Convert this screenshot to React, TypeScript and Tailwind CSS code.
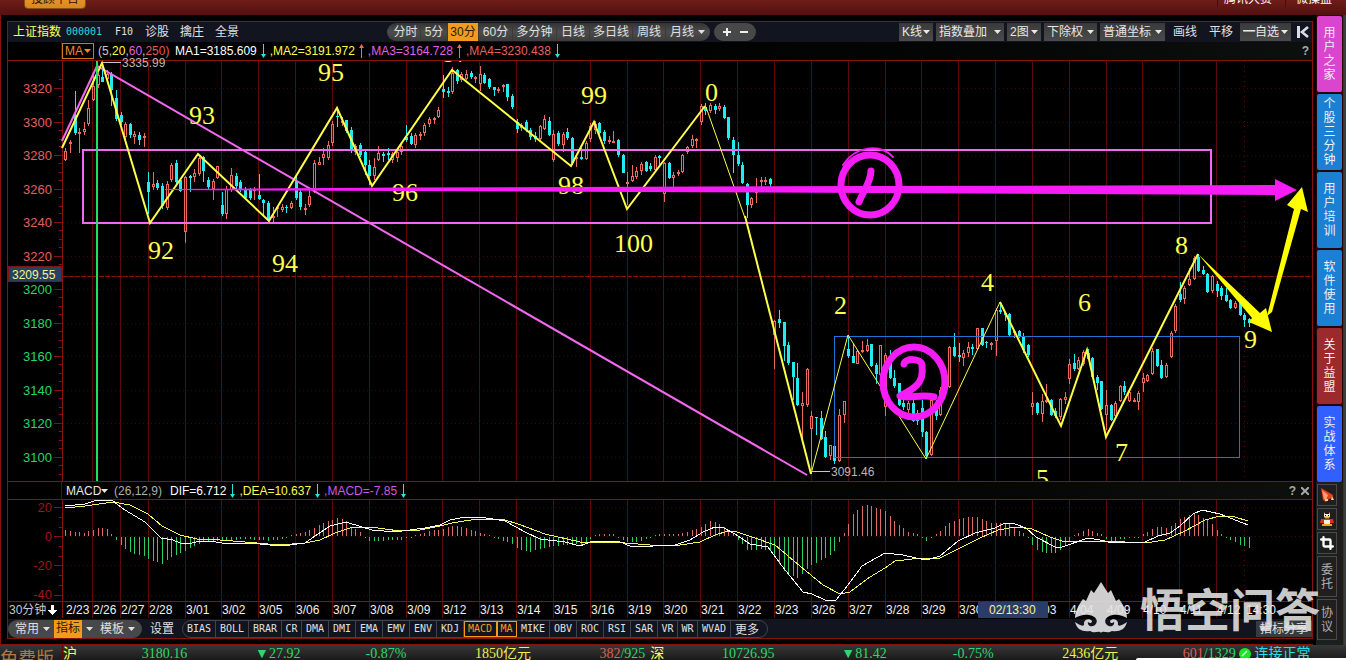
import type { ReactNode } from "react";
import clsx from "clsx";
import { Crop } from "lucide-react";

type Point = [number, number];
// [rising, high, body top, body bottom, low]
type Candle = [number, number, number, number, number];

const FIRST_BAR = 65.3;
const BAR_STEP = 4.605;

const barX = (index: number) => Math.round(FIRST_BAR + BAR_STEP * index);

const candles: Candle[] = [
  [1, 148, 151, 160, 161], [1, 140, 142, 144, 153], [0, 91, 115, 133, 135], [1, 128, 132, 134, 153],
  [1, 122, 129, 132, 135], [1, 100, 108, 124, 126], [1, 72, 86, 100, 101], [1, 73, 75, 85, 88],
  [0, 63, 77, 82, 82], [1, 70, 74, 79, 82], [0, 72, 74, 90, 106], [0, 90, 98, 119, 121],
  [0, 112, 115, 122, 125], [1, 122, 124, 137, 140], [0, 123, 124, 135, 138], [1, 131, 134, 137, 144],
  [0, 132, 135, 140, 145], [1, 133, 136, 138, 147],
  [0, 172, 182, 192, 214], [1, 172, 184, 187, 190], [0, 180, 183, 188, 190], [0, 183, 186, 206, 209],
  [1, 181, 184, 208, 210], [1, 163, 165, 180, 182], [0, 160, 163, 182, 184], [0, 178, 180, 191, 192],
  [1, 176, 177, 232, 243], [0, 175, 176, 178, 192], [1, 169, 173, 177, 182], [1, 155, 158, 174, 176],
  [0, 156, 157, 171, 182], [0, 177, 180, 187, 190], [1, 179, 181, 189, 200], [1, 166, 166, 178, 179],
  [0, 192, 205, 214, 216], [1, 186, 189, 214, 219], [1, 168, 175, 190, 192], [0, 173, 176, 186, 189],
  [0, 180, 182, 190, 192], [0, 187, 189, 198, 199], [0, 188, 190, 198, 200], [1, 187, 189, 190, 200],
  [0, 174, 195, 199, 200], [0, 199, 200, 203, 215], [0, 201, 203, 219, 222], [1, 207, 216, 218, 222],
  [1, 206, 207, 209, 217], [1, 204, 207, 210, 212], [0, 205, 207, 208, 213], [1, 201, 203, 208, 209],
  [0, 175, 181, 198, 200], [0, 190, 192, 207, 210], [1, 204, 208, 210, 215], [1, 190, 196, 205, 207],
  [1, 160, 163, 192, 193], [1, 157, 162, 165, 165], [1, 148, 154, 158, 165], [1, 141, 145, 158, 160],
  [1, 121, 124, 143, 146], [0, 107, 116, 117, 127], [1, 117, 121, 123, 126], [0, 120, 120, 131, 133],
  [0, 127, 130, 150, 153], [1, 144, 146, 152, 155], [0, 143, 145, 155, 157], [0, 150, 152, 165, 175],
  [0, 160, 165, 176, 185], [1, 158, 167, 176, 180], [1, 146, 153, 160, 161], [0, 152, 154, 156, 162],
  [0, 148, 153, 155, 160], [1, 152, 154, 160, 163], [1, 150, 152, 158, 162], [1, 142, 146, 152, 155],
  [0, 125, 137, 140, 142], [0, 133, 136, 144, 145], [1, 133, 135, 145, 148], [1, 132, 134, 135, 140],
  [1, 123, 125, 133, 136], [1, 117, 119, 124, 127], [1, 117, 118, 120, 124], [1, 107, 110, 117, 118],
  [0, 75, 89, 92, 98], [0, 87, 91, 93, 97], [1, 67, 73, 92, 94], [0, 69, 70, 81, 84],
  [1, 72, 74, 80, 82], [1, 70, 74, 79, 80], [0, 71, 73, 77, 79], [1, 76, 77, 79, 83],
  [1, 66, 74, 84, 91], [0, 73, 75, 83, 84], [0, 78, 79, 87, 89], [0, 87, 87, 90, 96],
  [1, 87, 89, 91, 93], [1, 84, 85, 86, 92], [0, 84, 84, 97, 101], [0, 94, 96, 107, 109],
  [0, 119, 122, 129, 133], [1, 123, 125, 128, 131], [0, 120, 122, 130, 132], [0, 128, 130, 137, 140],
  [0, 132, 136, 139, 142], [1, 125, 126, 139, 142], [1, 115, 119, 129, 130], [0, 117, 121, 135, 136],
  [1, 130, 134, 160, 162], [0, 131, 133, 144, 146], [1, 132, 134, 145, 152], [0, 128, 132, 138, 140],
  [0, 137, 138, 163, 165], [1, 155, 157, 159, 167], [0, 148, 157, 159, 160], [1, 141, 143, 159, 160],
  [1, 123, 126, 139, 142], [1, 121, 124, 130, 134], [0, 122, 123, 133, 135], [0, 130, 132, 141, 144],
  [1, 136, 140, 142, 144], [1, 131, 141, 142, 143], [0, 139, 140, 155, 157], [0, 154, 155, 173, 173],
  [1, 172, 182, 183, 205], [1, 165, 176, 181, 182], [1, 167, 171, 177, 179], [1, 162, 164, 171, 175],
  [0, 161, 162, 171, 172], [0, 163, 166, 169, 171], [1, 155, 157, 170, 172], [0, 155, 156, 158, 167],
  [1, 162, 163, 194, 202], [0, 162, 163, 178, 179], [1, 172, 175, 178, 188], [1, 170, 172, 174, 176],
  [1, 154, 155, 172, 173], [1, 146, 147, 152, 154], [1, 135, 139, 146, 148], [1, 138, 139, 140, 148],
  [1, 104, 106, 122, 125], [0, 103, 107, 111, 115], [1, 103, 105, 111, 113], [0, 104, 106, 110, 114],
  [1, 103, 106, 109, 111], [0, 105, 107, 118, 119], [0, 117, 117, 138, 140], [0, 137, 140, 155, 173],
  [0, 142, 155, 164, 166], [0, 162, 165, 183, 184], [0, 183, 184, 205, 218], [1, 197, 198, 205, 208],
  [1, 178, 190, 193, 203], [1, 177, 180, 181, 191], [1, 177, 180, 181, 185], [0, 178, 179, 184, 187],
  [1, 320, 321, 335, 369], [0, 310, 319, 323, 328], [0, 322, 322, 346, 361], [0, 342, 345, 363, 365],
  [0, 362, 362, 377, 400], [0, 363, 378, 405, 406], [1, 392, 403, 406, 440], [1, 368, 369, 405, 407],
  [1, 411, 416, 429, 470], [0, 417, 417, 418, 435], [0, 411, 418, 439, 440], [0, 431, 437, 457, 458],
  [1, 445, 445, 456, 460], [0, 445, 446, 461, 464], [1, 409, 415, 461, 462], [1, 401, 401, 415, 423],
  [0, 335, 349, 356, 358], [0, 344, 356, 363, 363], [1, 350, 351, 364, 364], [1, 341, 350, 352, 353],
  [1, 339, 345, 351, 352], [0, 344, 344, 366, 367], [0, 363, 365, 374, 384], [1, 345, 345, 375, 376],
  [1, 353, 355, 407, 416], [0, 350, 360, 378, 379], [0, 370, 378, 386, 388], [0, 383, 383, 405, 406],
  [0, 400, 403, 407, 410], [1, 401, 403, 410, 414], [0, 399, 403, 421, 422], [0, 410, 413, 421, 425],
  [0, 400, 408, 432, 437], [0, 431, 432, 456, 459], [1, 395, 400, 455, 456], [0, 400, 403, 416, 420],
  [1, 387, 390, 415, 416], [1, 375, 378, 390, 392], [1, 346, 347, 387, 388], [0, 333, 347, 356, 357],
  [0, 343, 355, 357, 362], [1, 350, 353, 358, 366], [1, 342, 347, 353, 357], [0, 344, 347, 349, 355],
  [1, 328, 328, 349, 350], [0, 328, 328, 345, 346], [0, 341, 342, 343, 348], [1, 342, 343, 344, 350],
  [1, 308, 310, 341, 356], [0, 305, 310, 312, 314], [0, 312, 313, 315, 321], [0, 313, 314, 335, 336],
  [1, 330, 331, 333, 338], [0, 330, 331, 336, 338], [0, 333, 336, 350, 353], [0, 344, 345, 355, 357],
  [1, 392, 403, 407, 415], [0, 402, 403, 413, 415], [1, 394, 401, 414, 422], [1, 384, 400, 402, 403],
  [0, 399, 400, 415, 416], [0, 408, 411, 416, 418], [1, 398, 399, 417, 420], [1, 392, 397, 400, 404],
  [1, 359, 364, 379, 384], [0, 354, 363, 369, 371], [1, 357, 360, 369, 370], [1, 350, 352, 364, 366],
  [0, 349, 353, 359, 360], [0, 357, 358, 377, 378], [0, 375, 377, 383, 390], [0, 381, 381, 409, 410],
  [1, 390, 405, 415, 430], [0, 404, 405, 420, 421], [1, 401, 403, 416, 418], [1, 385, 386, 401, 402],
  [0, 381, 386, 392, 395], [1, 390, 392, 401, 402], [1, 398, 400, 401, 402], [1, 391, 393, 402, 410],
  [1, 373, 378, 383, 392], [1, 374, 375, 381, 382], [1, 348, 351, 374, 375], [0, 349, 349, 366, 367],
  [0, 360, 365, 378, 379], [1, 363, 365, 377, 378], [1, 331, 333, 357, 358], [1, 304, 306, 331, 333],
  [0, 282, 294, 300, 302], [1, 286, 288, 299, 304], [1, 268, 279, 285, 286], [1, 256, 258, 279, 280],
  [0, 254, 257, 271, 272], [0, 266, 270, 274, 275], [0, 273, 274, 292, 293], [1, 275, 276, 291, 293],
  [0, 281, 284, 291, 297], [0, 286, 288, 296, 300], [0, 288, 295, 301, 302], [0, 299, 300, 308, 309],
  [1, 301, 303, 308, 309], [0, 303, 303, 315, 316], [0, 313, 315, 320, 327], [0, 318, 319, 323, 327],
];

const dayLines = [
  92, 120, 148, 185, 221, 258, 295, 332, 369, 406, 442, 479, 516, 553, 590, 627, 663, 700, 737, 774,
  811, 848, 885, 921, 958, 995, 1032, 1069, 1106, 1142, 1179, 1216,
];

const dateLabels: [string, number][] = [
  ["2/23", 66], ["2/26", 93], ["2/27", 121], ["2/28", 149], ["3/01", 186], ["3/02", 222],
  ["3/05", 259], ["3/06", 296], ["3/07", 333], ["3/08", 370], ["3/09", 407], ["3/12", 443],
  ["3/13", 480], ["3/14", 517], ["3/15", 554], ["3/16", 591], ["3/19", 628], ["3/20", 664],
  ["3/21", 701], ["3/22", 738], ["3/23", 775], ["3/26", 812], ["3/27", 849], ["3/28", 886],
  ["3/29", 922], ["3/30", 959], ["4/03", 1033], ["4/04", 1070], ["4/09", 1107], ["4/10", 1143],
  ["4/11", 1180], ["4/12", 1217], ["14:30", 1246],
];

const prices = [3320, 3300, 3280, 3260, 3240, 3220, 3200, 3180, 3160, 3140, 3120, 3100];
const priceY = (price: number) => Math.round(89 + (3320 - price) * 1.677);

const waveLabels: [string, number, number][] = [
  ["92", 148, 259], ["93", 189, 124], ["94", 272, 272], ["95", 318, 81], ["96", 392, 201],
  ["97", 443, 62], ["98", 558, 194], ["99", 581, 104], ["100", 614, 252], ["0", 705, 101],
  ["2", 834, 314], ["4", 981, 291], ["5", 1036, 487], ["6", 1078, 311], ["7", 1115, 461],
  ["8", 1175, 254], ["9", 1244, 348],
];

const macdHeights: Point[] = [
  [65, 6], [74, 4], [84, 3], [97, 8], [107, 7], [112, 1], [116, -3], [125, -12], [134, -17], [143, -18],
  [150, -23], [162, -27], [171, -20], [185, -14], [195, -9], [204, -5], [222, -4], [245, -2], [270, -4],
  [286, -1], [292, 1], [305, 4], [314, 8], [325, 14], [337, 18], [345, 16], [352, 8], [358, 5], [364, 1],
  [369, -4], [400, -3], [408, -1], [415, 1], [430, 5], [442, 7], [455, 11], [466, 8], [478, 4], [488, 1],
  [495, -1], [510, -6], [520, -13], [530, -15], [540, -12], [555, -9], [572, -7], [582, -8], [590, -2],
  [596, 2], [614, 2], [618, -1], [628, -6], [640, -4], [652, -1], [658, 2], [680, 2], [700, 8], [710, 15],
  [720, 12], [728, 6], [734, 1], [738, -3], [748, -14], [760, -12], [771, -14], [783, -34], [798, -41],
  [811, -28], [820, -24], [832, -17], [841, -2], [845, 4], [850, 18], [860, 30], [868, 31], [885, 25],
  [897, 12], [908, 4], [920, 1], [926, -4], [931, 0], [936, 2], [950, 14], [965, 19], [978, 19], [990, 13],
  [1008, 13], [1020, 4], [1028, 0], [1034, -12], [1045, -16], [1055, -16], [1064, -10], [1072, 0],
  [1080, 4], [1087, 7], [1098, 3], [1105, 0], [1108, -6], [1120, -2], [1140, 0], [1145, 3], [1155, 9],
  [1168, 8], [1180, 17], [1195, 23], [1210, 14], [1220, 2], [1228, -2], [1240, -8], [1249, -11],
];

const interpolate = (points: Point[], x: number) => {
  const next = points.findIndex((p) => p[0] >= x);
  if (next <= 0) return points[0][1];
  const [x0, y0] = points[next - 1];
  const [x1, y1] = points[next];
  return Math.round(y0 + ((y1 - y0) * (x - x0)) / (x1 - x0));
};

const difLine =
  "65,506 85,504 97,500 113,501 125,510 145,522 161,538 173,540 180,543 192,543 200,541 210,541 222,543 250,543 270,545 290,545 305,543 318,534 330,526 346,522 362,527 372,530 395,532 410,530 425,528 440,525 450,520 465,517 480,517 505,521 525,532 540,539 565,542 580,546 590,542 618,541 632,547 675,545 690,540 703,532 715,527 722,527 735,534 750,544 768,547 782,566 803,592 812,594 825,600 836,600 848,585 862,566 885,553 903,555 916,558 927,560 940,556 958,541 975,533 995,528 1005,523 1015,524 1026,528 1036,537 1055,547 1062,547 1088,538 1100,540 1112,543 1145,542 1158,536 1170,533 1180,526 1193,514 1202,510 1220,514 1248,525";
const deaLine =
  "65,508 85,506 113,502 130,505 148,514 162,526 180,535 197,539 220,540 245,542 280,545 305,543 320,540 335,533 350,528 370,527 400,531 420,530 440,526 452,523 477,519 505,520 518,524 545,534 580,542 595,542 625,543 650,545 680,545 700,542 715,535 728,531 737,532 752,537 775,545 800,566 823,585 840,594 850,592 870,577 885,568 895,561 921,558 940,558 960,548 980,538 998,530 1015,527 1032,529 1050,537 1065,542 1105,541 1145,543 1165,540 1185,531 1205,520 1220,516 1235,517 1248,521";

const periods = [
  { label: "分时", className: "w-[34px] pl-1" },
  { label: "5分", className: "w-[27px]" },
  { label: "30分", className: "w-[31px] bg-[#f59a1c] text-[#2a1a00]" },
  { label: "60分", className: "w-[34px]" },
  { label: "多分钟", className: "w-[44px]" },
  { label: "日线", className: "w-[33px]" },
  { label: "多日线", className: "w-[43px]" },
  { label: "周线", className: "w-[33px]" },
];

const indicators = [
  "BIAS", "BOLL", "BRAR", "CR", "DMA", "DMI", "EMA", "EMV", "ENV", "KDJ", "MACD", "MA", "MIKE",
  "OBV", "ROC", "RSI", "SAR", "VR", "WR", "WVAD",
];

const sideTabs = [
  { label: "用户之家", className: "bg-[#d945cc]" },
  { label: "个股三分钟", className: "bg-[#1b7fd4]" },
  { label: "用户培训", className: "bg-[#1b7fd4]" },
  { label: "软件使用", className: "bg-[#1b7fd4]" },
  { label: "关于益盟", className: "bg-[#9c2a2c]" },
  { label: "实战体系", className: "bg-[#3060ff]" },
];

const Caret = ({ className }: { className?: string }) => (
  <svg viewBox="0 0 7 4" className={clsx("h-1 w-[7px] shrink-0", className)}>
    <path d="M0 0h7L3.5 4z" fill="currentColor" />
  </svg>
);

const Trend = ({ up = false }: { up?: boolean }) => (
  <svg viewBox="0 0 5 14" className="mx-1 h-[14px] w-[5px] shrink-0">
    {up ? (
      <path d="M2 14V4H0L2.5 0 5 4H3v10z" fill="#f26a5e" />
    ) : (
      <path d="M2 0v10H0l2.5 4L5 10H3V0z" fill="#1fe5e5" />
    )}
  </svg>
);

const Dropdown = ({ label, className, options }: { label: string; className: string; options: string[] }) => (
  <label
    className={clsx(
      "relative flex h-[18px] items-center bg-linear-to-b from-[#3a3a3a] to-[#4a4a4a] text-[#e8e8e8]",
      className,
    )}
  >
    <span className="sr-only">{label}</span>
    <select className="w-full cursor-pointer appearance-none bg-transparent pl-[3px] outline-none">
      {options.map((option) => (
        <option key={option}>{option}</option>
      ))}
    </select>
    <Caret className="pointer-events-none absolute right-[3px]" />
  </label>
);

const Toolbar = () => (
  <div className="flex h-5 items-center bg-[#12141f] text-[#e0e0e0]">
    <div className="flex w-[379px] shrink-0 items-center pl-[5px]">
      <span className="w-[53px] text-[#ffff66]">上证指数</span>
      <span className="w-[49px] font-['DejaVu_Sans_Mono',monospace] text-[10px] text-[#2fd8d8]">000001</span>
      <button type="button" className="w-[30px] text-left font-['DejaVu_Sans_Mono',monospace] text-[10px]">
        F10
      </button>
      <button type="button" className="w-[35px] text-left">诊股</button>
      <button type="button" className="w-[35px] text-left">擒庄</button>
      <button type="button">全景</button>
    </div>
    <div className="flex h-[18px] overflow-hidden rounded-full bg-linear-to-b from-[#343434] via-[#4c4c4c] to-[#3c3c3c]">
      {periods.map((period) => (
        <button
          type="button"
          key={period.label}
          className={clsx("shrink-0 border-r border-[#3a3a3a] text-center", period.className)}
        >
          {period.label}
        </button>
      ))}
      <button type="button" className="flex w-11 items-center gap-1 pl-1">
        月线
        <Caret />
      </button>
    </div>
    <div className="ml-1 flex h-[18px] w-[42px] items-center justify-around rounded-full bg-[#484848] px-1">
      <button type="button" aria-label="放大">
        <svg viewBox="0 0 8 8" className="size-2">
          <path d="M0 4h8M4 0v8" stroke="#f0f0f0" strokeWidth="2" />
        </svg>
      </button>
      <button type="button" aria-label="缩小">
        <svg viewBox="0 0 8 8" className="size-2">
          <path d="M0 4h8" stroke="#f0f0f0" strokeWidth="2" />
        </svg>
      </button>
    </div>
    <div className="ml-auto flex items-center gap-[3px]">
      <Dropdown label="K线类型" className="w-[34px]" options={["K线"]} />
      <Dropdown label="叠加" className="w-[68px]" options={["指数叠加"]} />
      <Dropdown label="图数" className="w-[34px]" options={["2图"]} />
      <Dropdown label="复权" className="w-[53px]" options={["下除权"]} />
      <Dropdown label="坐标" className="w-[65px]" options={["普通坐标"]} />
      <button type="button" className="w-[34px]">画线</button>
      <button type="button" className="w-[32px]">平移</button>
      <Dropdown label="自选" className="w-[51px]" options={["━自选"]} />
      <button type="button" aria-label="收起" className="flex w-[18px] justify-center">
        <svg viewBox="0 0 12 12" className="size-3" fill="none" stroke="#d8dde6">
          <path d="M1.5 0v12" strokeWidth="3" />
          <path d="M11 1L5 6l6 5" strokeWidth="2.6" />
        </svg>
      </button>
    </div>
  </div>
);

const HeaderStrip = ({ children, right }: { children: ReactNode; right: ReactNode }) => (
  <div className="flex">
    <div className="w-[54px] shrink-0 border-r border-[#5a0c0c] bg-black" />
    <div className="flex grow items-center bg-linear-to-r from-black to-[#0c100f] whitespace-nowrap">
      {children}
      <div className="ml-auto flex items-center gap-[5px] pr-[3px] text-[#a8a8a8]">{right}</div>
    </div>
  </div>
);

const PriceChart = () => (
  <svg viewBox="8 61 1304 420" className="block h-auto w-full overflow-visible" shapeRendering="crispEdges">
    <clipPath id="plot">
      <rect x="62" y="61" width="1250" height="420" />
    </clipPath>
    <g stroke="#5e0808">
      {dayLines.map((x) => (
        <path key={x} d={`M${x + 0.5} 61V481`} />
      ))}
      <path d="M1244.5 61V481" strokeDasharray="1 4" />
    </g>
    <g stroke="#3a0606" strokeDasharray="1 3">
      {prices.map((price) => (
        <path key={price} d={`M63 ${priceY(price) - 0.5}H1312`} />
      ))}
    </g>
    <path d="M63 276.5H1312" stroke="#8c1212" strokeDasharray="5 1" />
    <g stroke="#8a1010">
      <path d="M62.5 61V481" />
      {prices.map((price) => (
        <path
          key={price}
          d={`M54 ${priceY(price) - 0.5}h9M59 ${priceY(price) + 7.5}h4M59 ${priceY(price) + 16.5}h4M59 ${priceY(price) - 9.5}h4`}
        />
      ))}
    </g>
    <g fontFamily="Liberation Sans, Arial, sans-serif" fontSize="13" textAnchor="end">
      {prices.map((price) => (
        <text key={price} x="52" y={priceY(price) + 4} fill={price > 3209 ? "#e06060" : "#22d868"}>
          {price}
        </text>
      ))}
    </g>

    <g>
      {candles.map(([up, high, top, bottom, low], i) => {
        const x = barX(i);
        return up ? (
          <g key={i} stroke="#ee6a60" fill="none">
            <path d={`M${x + 0.5} ${high}V${top}M${x + 0.5} ${bottom}V${low}`} />
            <rect x={x - 0.5} y={top + 0.5} width="2" height={Math.max(bottom - top - 1, 1)} />
          </g>
        ) : (
          <g key={i} fill="#22ecf0">
            <rect x={x} y={high} width="1" height={low - high} />
            <rect x={x - 1} y={top} width="3" height={Math.max(bottom - top, 1)} />
          </g>
        );
      })}
    </g>

    <path d="M834.5 336.5H1239.5V457.5H834.5z" fill="none" stroke="#2272d8" />
    <path d="M83 150H1211V223H83z" fill="none" stroke="#f268ee" strokeWidth="2" />

    <g fill="none" shapeRendering="auto" strokeWidth="2">
      <path d="M62 141L97 66L807 475" stroke="#f268ee" />
      <g stroke="#ffff4a">
        <path d="M62 148L102 63L150 223L198 154L269 221L337 108L372 186L452 70L571 166L594 122L627 209L705 106" />
        <path d="M745 216L811 474" />
        <path d="M1000 302L1061 426L1087 350L1106 437L1198 254" />
        <path d="M706 107L745 218M811 474L848 335L926 459L1000 302" strokeWidth="1" />
      </g>
    </g>

    <path d="M97 61V481" stroke="#1fe060" strokeWidth="2" />
    <path d="M103 62.5H121M811 471.5H830" stroke="#c8c8c8" />
    <g fontFamily="Liberation Sans, Arial, sans-serif" fontSize="12" fill="#b8b8b8">
      <text x="122" y="67">3335.99</text>
      <text x="831" y="476">3091.46</text>
    </g>

    <g clipPath="url(#plot)" fontFamily="Liberation Serif, Times New Roman, serif" fontSize="26" fill="#ffff50">
      {waveLabels.map(([label, x, y]) => (
        <text key={label} x={x} y={y}>
          {label}
        </text>
      ))}
    </g>

    <g shapeRendering="auto">
      <path d="M165 189L400 187.5L870 186L1275 185V179L1297 190L1275 201V195L870 193L400 191L165 190z" fill="#f51cf5" />
      <g fill="none" stroke="#f51cf5" strokeLinecap="round" strokeLinejoin="round" strokeWidth="7">
        <ellipse cx="870" cy="185" rx="29" ry="30" />
        <path d="M843 165C855 146 880 143 893 157" strokeWidth="2" />
        <path d="M871 171C871 182 863 191 859 202" />
        <ellipse cx="914" cy="382" rx="31" ry="35" />
        <path d="M904 364C905 358 921 358 922 365C923 374 922 380 917 385C912 390 906 393 900 396C908 399 922 394 934 397" />
      </g>
      <g fill="#ffff00">
        <path d="M1198 254L1260 313L1266 308L1272 332L1249 322L1252 318z" />
        <path d="M1267 316L1294 209L1287 205L1302 187L1308 212L1301 209L1272 312z" />
      </g>
    </g>

    <rect x="8.5" y="266.5" width="53" height="15" fill="#27405f" stroke="#7c1414" />
    <text x="12" y="279" fontFamily="Liberation Sans, Arial, sans-serif" fontSize="12" fill="#f4f48c">
      3209.55
    </text>
  </svg>
);

const MacdChart = () => (
  <svg viewBox="8 500 1304 119" className="block h-auto w-full overflow-hidden" shapeRendering="crispEdges">
    <g stroke="#5e0808">
      {dayLines.map((x) => (
        <path key={x} d={`M${x + 0.5} 500V618`} />
      ))}
      <path d="M1244.5 500V601" strokeDasharray="1 4" />
    </g>
    <path d="M63 507.5H1312M63 536.5H1312M63 565.5H1312M63 595.5H1312" stroke="#3a0606" strokeDasharray="1 3" />
    <path
      d="M62.5 500V618M54 507.5h9M54 536.5h9M54 565.5h9M54 595.5h9M59 517.5h4M59 527.5h4M59 546.5h4M59 556.5h4M59 575.5h4M59 585.5h4M8 601.5H1312"
      stroke="#8a1010"
    />
    <g fontFamily="Liberation Sans, Arial, sans-serif" fontSize="13" textAnchor="end" fill="#a01616">
      <text x="52" y="512">20</text>
      <text x="52" y="541">0</text>
      <text x="52" y="570">-20</text>
      <text x="52" y="599">-40</text>
    </g>
    {candles.map((_, i) => {
      const x = barX(i);
      const height = interpolate(macdHeights, x);
      return height > 0 ? (
        <rect key={i} x={x} y={536 - height} width="1" height={height} fill="#e26a66" />
      ) : (
        <rect key={i} x={x} y="537" width="1" height={Math.max(-height, 1)} fill="#2ecf62" />
      );
    })}
    <polyline points={deaLine} fill="none" stroke="#f4f45c" />
    <polyline points={difLine} fill="none" stroke="#ffffff" />
    <g fontFamily="Liberation Sans, Arial, sans-serif" fontSize="12" fill="#f0f0f0">
      {dateLabels.map(([label, x]) => (
        <text key={label} x={x} y="614">
          {label}
        </text>
      ))}
      <rect x="978" y="602" width="70" height="16" fill="#2c3c68" />
      <text x="989" y="614" fill="#f4f48c">
        02/13:30
      </text>
    </g>
    <text x="9" y="614" fontFamily="Liberation Sans, Noto Sans CJK SC, sans-serif" fontSize="12" fill="#c8c8c8">
      30分钟
    </text>
    <path d="M51 605h3v5h3l-4.500 5l-4.500 -5h3z" fill="#ffffff" />
  </svg>
);

const IndicatorBar = () => (
  <div className="flex h-[19px] items-center bg-[#12141f] text-[#e0e0e0]">
    <div className="flex h-[18px] w-[134px] shrink-0 items-center overflow-hidden rounded-full bg-[#484848] pl-[7px]">
      <button type="button" className="flex w-[39px] items-center gap-1">
        常用
        <Caret />
      </button>
      <button type="button" className="flex h-full items-center">
        <span className="h-full w-7 bg-[#f59a1c] leading-[17px] text-[#2a1a00]">指标</span>
        <Caret className="ml-1" />
      </button>
      <button type="button" className="ml-[7px] flex items-center gap-1">
        模板
        <Caret />
      </button>
    </div>
    <button type="button" className="mx-2">设置</button>
    <div className="flex h-[18px] overflow-hidden rounded-full border border-[#40424c] font-['DejaVu_Sans_Mono',monospace] text-[10px]">
      {indicators.map((name) => (
        <button
          type="button"
          key={name}
          className={clsx(
            "shrink-0 border-r text-center",
            name.length === 4 && "w-[33px]",
            name.length === 3 && "w-[27px]",
            name.length === 2 && "w-5",
            name === "MACD" || name === "MA"
              ? "border-[#f59a1c] text-[#f59a1c] outline-1 -outline-offset-1 outline-[#f59a1c]"
              : "border-[#40424c]",
          )}
        >
          {name}
        </button>
      ))}
      <button type="button" className="px-1 pr-2 font-['Noto_Sans_CJK_SC',sans-serif] text-xs leading-4">
        更多
      </button>
    </div>
    <button type="button" className="ml-auto h-4 bg-[#3a3a3e] px-1 leading-4">
      指标分享
    </button>
  </div>
);

const Watermark = () => (
  <div className="pointer-events-none absolute -right-2 bottom-1 z-10 flex items-center gap-3 text-[#e4e4e4]/90">
    <svg viewBox="0 0 54 52" className="h-[52px] w-[54px]">
      <path
        d="M27 0L34 11L37 8L42 19L45 17C50 24 53 30 53 36C49 34 44 32 39 33C32 34 29 39 33 43C37 46 41 43 40 40C38 42 36 41 36 39C38 36 44 37 44 41C43 46 49 43 53 40C51 48 45 50 38 49C33 52 29 48 27 51C25 48 21 52 16 49C9 50 3 48 1 40C5 43 11 46 10 41C10 37 16 36 18 39C18 41 16 42 14 40C13 43 17 46 21 43C25 39 22 34 15 33C10 32 5 34 1 36C1 30 4 24 9 17L12 19L17 8L20 11z"
        fill="currentColor"
      />
    </svg>
    <span className="font-['Noto_Sans_CJK_SC',sans-serif] text-[45px] leading-[52px] font-bold">悟空问答</span>
  </div>
);

const Sidebar = () => (
  <aside className="flex w-[33px] shrink-0 flex-col border-r-2 border-[#3a3f3f] pl-[3px] text-center text-[#f0f0f0]">
    <nav className="flex flex-col gap-[2px] border-r border-[#8a1010] bg-[#260606] px-px pt-px">
      {sideTabs.map((tab) => (
        <a
          key={tab.label}
          href="#"
          className={clsx("flex h-[76px] items-center justify-center rounded-xs leading-[14px]", tab.className)}
        >
          <span className="w-3">{tab.label}</span>
        </a>
      ))}
    </nav>
    <div className="flex grow flex-col gap-[2px] border-r border-[#8a1010] bg-[#1c1f1f] pt-[2px] pr-[6px] pl-px text-[#b0b0b0]">
      <button type="button" aria-label="火箭" className="flex h-[22px] items-center justify-center border border-[#4a4a4a] bg-[#1f1f1f]">
        <svg viewBox="0 0 14 14" className="size-[14px]">
          <path d="M1 0L13 7L12 10L9 11L6 14L3 12z" fill="#e8401c" />
          <path d="M2 2L8 7L6 12L4 11z" fill="#ff9a7a" />
          <path d="M12 8l2 4h-3zM5 11h3v2H5z" fill="#ffd27a" />
        </svg>
      </button>
      <button type="button" aria-label="QQ" className="flex h-[22px] items-center justify-center border border-[#4a4a4a] bg-[#1f1f1f]">
        <svg viewBox="0 0 14 14" className="size-[14px]">
          <path d="M4 0h6v5H4z" fill="#f4efe8" />
          <path d="M4 0h6l-1 2H5z" fill="#2a1a16" />
          <path d="M5 3h1v1H5zM8 3h1v1H8z" fill="#111111" />
          <path d="M4 4.500h6l-1 2H5z" fill="#f5a11c" />
          <path d="M1 7h12l1 4H0z" fill="#e0301c" />
          <path d="M4 8h6v4H4z" fill="#f4efe8" />
          <path d="M2 12h10v2H2z" fill="#f5a11c" />
        </svg>
      </button>
      <button type="button" aria-label="截图" className="flex h-[22px] items-center justify-center border border-[#4a4a4a] bg-[#1f1f1f] text-white">
        <Crop size={14} strokeWidth={4} />
      </button>
      <button type="button" className="flex h-[41px] items-center justify-center border border-[#4a4a4a] bg-[#1f1f1f] leading-[14px]">
        <span className="w-3">委托</span>
      </button>
      <button type="button" className="flex h-[41px] items-center justify-center border border-[#4a4a4a] bg-[#1f1f1f] leading-[14px]">
        <span className="w-3">协议</span>
      </button>
    </div>
  </aside>
);

const StatusBar = () => (
  <footer className="relative grid h-[15px] grid-cols-[56fr_80fr_114fr_111fr_110fr_125fr_51fr_72fr_120fr_112fr_110fr_121fr_56fr_108fr] overflow-hidden bg-linear-to-b from-[#383838] to-[#1a1a1a] font-['Liberation_Serif','Noto_Sans_CJK_SC',serif] text-sm leading-[18px] whitespace-nowrap text-[#2ed86a]">
    <span className="pt-1 text-right text-lg leading-5 text-[#b07840]">
      <span className="pr-2">免费版</span>
    </span>
    <span className="border-l border-[#5e0808] text-[#ffff50]">沪</span>
    <span>3180.16</span>
    <span>▼27.92</span>
    <span>-0.87%</span>
    <span className="text-[#f0f050]">1850亿元</span>
    <span>
      <span className="text-[#e05c5c]">382</span>/925
    </span>
    <span className="text-[#ffff50]">深</span>
    <span>10726.95</span>
    <span>▼81.42</span>
    <span>-0.75%</span>
    <span className="text-[#f0f050]">2436亿元</span>
    <span>
      <span className="text-[#e05c5c]">601</span>/1329
    </span>
    <span className="flex items-start gap-1 text-[#22e0e8]">
      <svg viewBox="0 0 12 12" className="mt-[3px] size-3">
        <circle cx="6" cy="6" r="6" fill="#18e828" />
        <path d="M3 8L8 3" stroke="#d8ffd8" strokeWidth="1.5" />
      </svg>
      连接正常
    </span>
    <div className="absolute right-0 bottom-0 h-[2px] w-[210px] rounded-tl bg-white" />
  </footer>
);

const App = () => {
  return (
    <div className="flex min-h-screen flex-col overflow-hidden bg-black font-['Liberation_Sans','Noto_Sans_CJK_SC',sans-serif] text-xs">
      <header className="flex h-[15px] items-end overflow-hidden bg-linear-to-b from-[#6e1d18] to-[#551010] text-white">
        <button
          type="button"
          className="mb-[6px] ml-6 h-5 w-[62px] rounded-sm border border-[#8a5010] bg-linear-to-b from-[#f0a030] to-[#d88820] text-xs leading-[13px] text-[#2a1200]"
        >
          投顾平台
        </button>
        <a href="#" className="mb-2 ml-auto w-[68px] border-l border-[#4a0c0c] pl-[6px] leading-[15px]">
          腾讯大赛
        </a>
        <a href="#" className="mb-2 w-[61px] border-l border-[#4a0c0c] pl-[10px] leading-[15px]">
          微操盘
        </a>
      </header>

      <div className="flex grow">
        <main className="flex min-w-0 grow flex-col border-b border-l border-[#8a1010] pt-[6px] pb-[5px] pl-[6px]">
          <section className="relative border border-[#8a1010]">
            <Toolbar />
            <div className="grid h-[19px] border-b border-[#8a1010]">
              <HeaderStrip right={<button type="button" className="font-bold">?</button>}>
                <button
                  type="button"
                  className="mr-1 flex h-4 items-center gap-px border border-[#d07820] px-[2px] text-[#f08a2a]"
                >
                  MA
                  <Caret />
                </button>
                <span className="w-[77px] text-[#c8c8c8]">
                  (5,<span className="text-[#ffff50]">20</span>,<span className="text-[#e85ce8]">60</span>,
                  <span className="text-[#e05c5c]">250)</span>
                </span>
                <span className="text-white">MA1=3185.609</span>
                <Trend />
                <span className="text-[#ffff50]">,MA2=3191.972</span>
                <Trend up />
                <span className="text-[#e85ce8]">,MA3=3164.728</span>
                <Trend up />
                <span className="text-[#e8605c]">,MA4=3230.438</span>
                <Trend />
              </HeaderStrip>
            </div>
            <PriceChart />
            <div className="grid h-[19px] border-y border-[#8a1010]">
              <HeaderStrip
                right={
                  <>
                    <button type="button" className="font-bold">?</button>
                    <button type="button" aria-label="关闭">
                      <svg viewBox="0 0 8 8" className="size-2">
                        <path d="M0 0l8 8M8 0L0 8" stroke="currentColor" strokeWidth="2" />
                      </svg>
                    </button>
                  </>
                }
              >
                <button type="button" className="flex w-[52px] items-center pl-1 text-[#e8e8e8]">
                  MACD
                  <Caret />
                </button>
                <span className="w-14 text-[#b0b0b0]">(26,12,9)</span>
                <span className="text-white">DIF=6.712</span>
                <Trend />
                <span className="text-[#ffff50]">,DEA=10.637</span>
                <Trend />
                <span className="text-[#c85ae8]">,MACD=-7.85</span>
                <Trend />
              </HeaderStrip>
            </div>
            <MacdChart />
            <IndicatorBar />
            <Watermark />
          </section>
        </main>
        <Sidebar />
      </div>
      <StatusBar />
    </div>
  );
};

export default App;
